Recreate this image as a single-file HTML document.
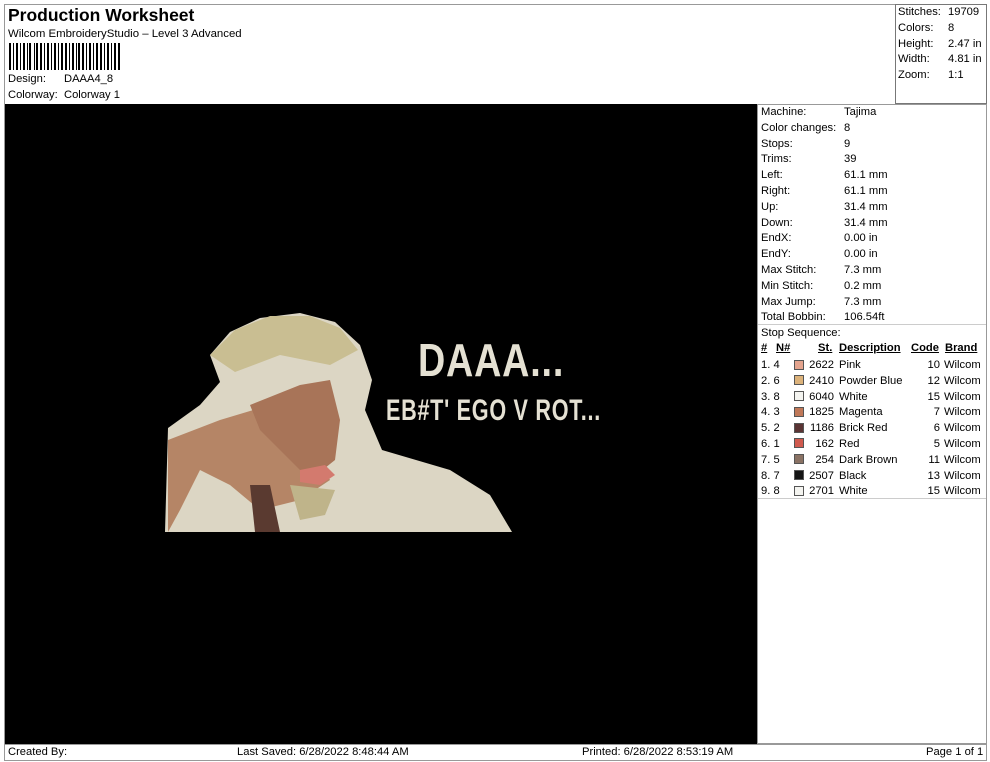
<!DOCTYPE html>
<html><head><meta charset="utf-8"><style>
*{margin:0;padding:0;box-sizing:border-box}
body{width:990px;height:762px;background:#fff;font-family:"Liberation Sans",Arial,sans-serif;color:#000;position:relative;overflow:hidden;font-size:11.2px}
.a{position:absolute;white-space:nowrap}
.box{position:absolute;border:1px solid #777}
.sw{position:absolute;width:10px;height:10px;border:1px solid #555}
</style></head><body>
<div class="box" style="left:4px;top:4px;width:983px;height:757px;border-color:#999"></div>
<div class="box" style="left:895px;top:4px;width:92px;height:100px;border-color:#777"></div>
<div class="a" style="left:8px;top:5px;font-size:17.5px;font-weight:bold">Production Worksheet</div>
<div class="a" style="left:8px;top:28px;font-size:11.4px">Wilcom EmbroideryStudio – Level 3 Advanced</div>
<svg class="a" style="left:9px;top:43px" width="111" height="27">
<g fill="#000">
<rect x="0" y="0" width="2" height="27"/><rect x="4" y="0" width="1" height="27"/><rect x="7" y="0" width="2" height="27"/><rect x="11" y="0" width="1" height="27"/><rect x="14" y="0" width="2" height="27"/><rect x="18" y="0" width="1" height="27"/><rect x="20" y="0" width="2" height="27"/><rect x="25" y="0" width="1" height="27"/><rect x="27" y="0" width="2" height="27"/><rect x="31" y="0" width="2" height="27"/><rect x="35" y="0" width="1" height="27"/><rect x="38" y="0" width="2" height="27"/><rect x="42" y="0" width="1" height="27"/><rect x="45" y="0" width="2" height="27"/><rect x="49" y="0" width="1" height="27"/><rect x="52" y="0" width="2" height="27"/><rect x="56" y="0" width="2" height="27"/><rect x="60" y="0" width="1" height="27"/><rect x="63" y="0" width="2" height="27"/><rect x="67" y="0" width="1" height="27"/><rect x="69" y="0" width="2" height="27"/><rect x="73" y="0" width="2" height="27"/><rect x="77" y="0" width="1" height="27"/><rect x="80" y="0" width="2" height="27"/><rect x="84" y="0" width="1" height="27"/><rect x="87" y="0" width="2" height="27"/><rect x="91" y="0" width="2" height="27"/><rect x="95" y="0" width="1" height="27"/><rect x="98" y="0" width="2" height="27"/><rect x="102" y="0" width="1" height="27"/><rect x="105" y="0" width="2" height="27"/><rect x="109" y="0" width="2" height="27"/>
</g></svg>
<div class="a" style="left:8px;top:73px">Design:</div><div class="a" style="left:64px;top:73px">DAAA4_8</div>
<div class="a" style="left:8px;top:89px">Colorway:</div><div class="a" style="left:64px;top:89px">Colorway 1</div>

<div class="a" style="left:898px;top:5px;line-height:15.8px">Stitches:<br>Colors:<br>Height:<br>Width:<br>Zoom:</div>
<div class="a" style="left:948px;top:5px;line-height:15.8px">19709<br>8<br>2.47 in<br>4.81 in<br>1:1</div>

<div style="position:absolute;left:5px;top:104px;width:752px;height:640px;background:#000"></div>
<div class="box" style="left:757px;top:104px;width:230px;height:640px;border-color:#999"></div>

<svg class="a" style="left:160px;top:310px" width="450" height="230">
<path d="M5 222 L8 118 L40 95 L60 72 L50 45 L70 22 L100 8 L140 3 L175 12 L200 35 L212 70 L205 100 L222 140 L290 160 L330 185 L352 222 Z" fill="#dcd6c4"/>
<path d="M50 45 L75 20 L110 6 L150 6 L180 18 L198 40 L170 55 L120 45 L75 62 Z" fill="#c9be92"/>
<path d="M8 130 L60 110 L110 95 L150 105 L160 150 L170 170 L140 190 L100 200 L70 175 L40 160 L20 200 L8 222 Z" fill="#b58566"/>
<path d="M90 95 L140 75 L170 70 L180 110 L175 150 L150 170 L120 140 L100 120 Z" fill="#a87458"/>
<path d="M140 160 L165 155 L175 165 L160 175 L140 172 Z" fill="#d37a6e"/>
<path d="M90 175 L110 175 L120 222 L95 222 Z" fill="#5a3a30"/>
<path d="M130 175 L175 180 L165 205 L140 210 Z" fill="#bfb48a"/>
</svg>
<div class="a" style="left:418px;top:333px;font-size:46px;font-weight:bold;color:#e5e1d3;transform:scaleX(0.82);transform-origin:left top;letter-spacing:1px">DAAA...</div>
<div class="a" style="left:386px;top:394px;font-size:30px;font-weight:bold;color:#e5e1d3;transform:scaleX(0.72);transform-origin:left top;letter-spacing:1px">EB#T' EGO V ROT...</div>

<div class="a" style="left:761px;top:105px;line-height:15.8px">Machine:<br>Color changes:<br>Stops:<br>Trims:<br>Left:<br>Right:<br>Up:<br>Down:<br>EndX:<br>EndY:<br>Max Stitch:<br>Min Stitch:<br>Max Jump:<br>Total Bobbin:<br>Stop Sequence:</div>
<div class="a" style="left:844px;top:105px;line-height:15.8px">Tajima<br>8<br>9<br>39<br>61.1 mm<br>61.1 mm<br>31.4 mm<br>31.4 mm<br>0.00 in<br>0.00 in<br>7.3 mm<br>0.2 mm<br>7.3 mm<br>106.54ft</div>
<div style="position:absolute;left:758px;top:324px;width:228px;border-top:1px solid #ccc"></div>
<div style="position:absolute;left:758px;top:498px;width:228px;border-top:1px solid #ccc"></div>

<div class="a" style="left:761px;top:342px;font-weight:bold;text-decoration:underline">#</div>
<div class="a" style="left:776px;top:342px;font-weight:bold;text-decoration:underline">N#</div>
<div class="a" style="left:818px;top:342px;font-weight:bold;text-decoration:underline">St.</div>
<div class="a" style="left:839px;top:342px;font-weight:bold;text-decoration:underline">Description</div>
<div class="a" style="left:911px;top:342px;font-weight:bold;text-decoration:underline">Code</div>
<div class="a" style="left:945px;top:342px;font-weight:bold;text-decoration:underline">Brand</div>

<div class="a" style="left:761px;top:358px;line-height:15.8px">1. 4<br>2. 6<br>3. 8<br>4. 3<br>5. 2<br>6. 1<br>7. 5<br>8. 7<br>9. 8</div>
<div class="a" style="left:806px;top:358px;line-height:15.8px;text-align:right;width:28px">2622<br>2410<br>6040<br>1825<br>1186<br>162<br>254<br>2507<br>2701</div>
<div class="a" style="left:839px;top:358px;line-height:15.8px">Pink<br>Powder Blue<br>White<br>Magenta<br>Brick Red<br>Red<br>Dark Brown<br>Black<br>White</div>
<div class="a" style="left:915px;top:358px;line-height:15.8px;text-align:right;width:25px">10<br>12<br>15<br>7<br>6<br>5<br>11<br>13<br>15</div>
<div class="a" style="left:944px;top:358px;line-height:15.8px">Wilcom<br>Wilcom<br>Wilcom<br>Wilcom<br>Wilcom<br>Wilcom<br>Wilcom<br>Wilcom<br>Wilcom</div>
<div class="sw" style="left:794px;top:360px;background:#e4a48e"></div>
<div class="sw" style="left:794px;top:375px;background:#dcb27a"></div>
<div class="sw" style="left:794px;top:391px;background:#f4f4f0"></div>
<div class="sw" style="left:794px;top:407px;background:#c07858"></div>
<div class="sw" style="left:794px;top:423px;background:#5a3434"></div>
<div class="sw" style="left:794px;top:438px;background:#d05a4e"></div>
<div class="sw" style="left:794px;top:454px;background:#8a7264"></div>
<div class="sw" style="left:794px;top:470px;background:#151515"></div>
<div class="sw" style="left:794px;top:486px;background:#f4f4f0"></div>

<div style="position:absolute;left:5px;top:744px;width:982px;border-top:1px solid #999"></div>
<div class="a" style="left:8px;top:746px">Created By:</div>
<div class="a" style="left:237px;top:746px">Last Saved: 6/28/2022 8:48:44 AM</div>
<div class="a" style="left:582px;top:746px">Printed: 6/28/2022 8:53:19 AM</div>
<div class="a" style="left:926px;top:746px">Page 1 of 1</div>
</body></html>
